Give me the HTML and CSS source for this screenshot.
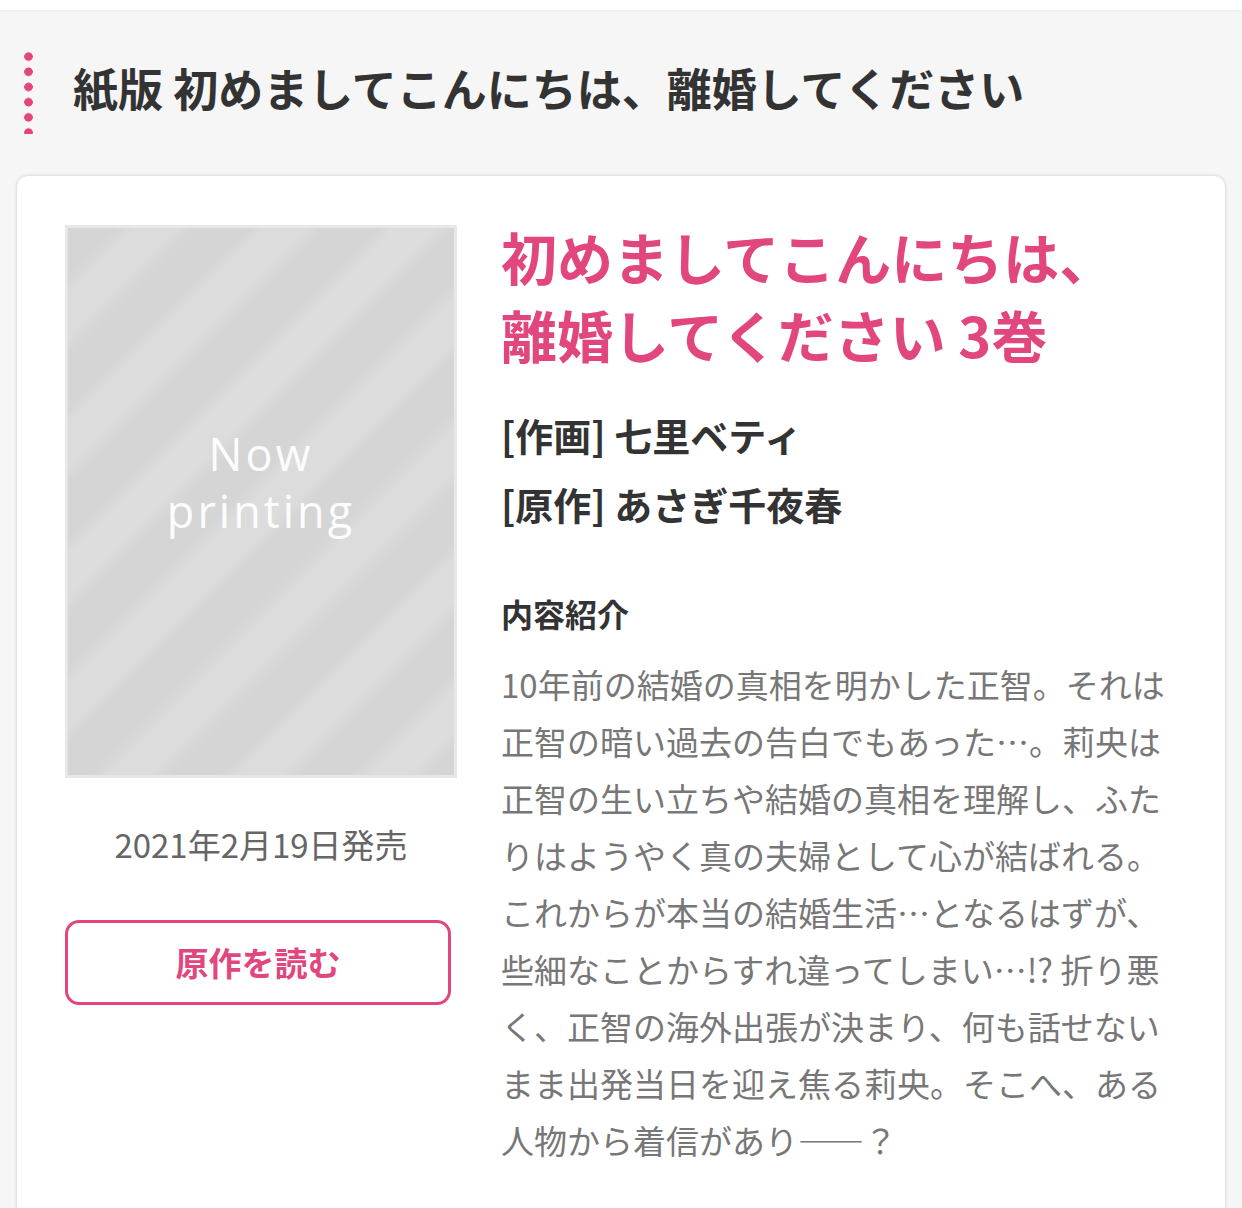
FILE: index.html
```html
<!DOCTYPE html>
<html lang="ja">
<head>
  <meta charset="UTF-8">
  <meta name="viewport" content="width=device-width, initial-scale=1.0">
  <title>紙版 初めましてこんにちは、離婚してください</title>
  <link rel="stylesheet" href="styles.css">
</head>
<body>
  <div class="topbar"></div>

  <header class="page-head">
    <span class="dots"></span>
    <h1 class="page-title">紙版 初めましてこんにちは、離婚してください</h1>
  </header>

  <section class="card">
    <div class="card-left">
      <div class="cover">
        <p class="cover-text">Now<br>printing</p>
      </div>
      <p class="release">2021年2月19日発売</p>
      <a class="btn-read" href="#">原作を読む</a>
    </div>

    <div class="card-right">
      <h2 class="book-title">初めましてこんにちは、<br>離婚してください 3巻</h2>
      <p class="credit">[作画] 七里ベティ</p>
      <p class="credit">[原作] あさぎ千夜春</p>

      <h3 class="intro-label">内容紹介</h3>
      <p class="intro">10年前の結婚の真相を明かした正智。それは正智の暗い過去の告白でもあった…。莉央は正智の生い立ちや結婚の真相を理解し、ふたりはようやく真の夫婦として心が結ばれる。これからが本当の結婚生活…となるはずが、些細なことからすれ違ってしまい…!? 折り悪く、正智の海外出張が決まり、何も話せないまま出発当日を迎え焦る莉央。そこへ、ある人物から着信があり——？</p>
    </div>
  </section>
</body>
</html>
```

FILE: styles.css
```css
:root {
  --color-fondo: #f6f6f6;
  --color-tarjeta: #ffffff;
  --color-rosa: #e2467f;
  --color-texto: #333333;
  --color-gris: #777777;
  --color-borde: #e4e4e4;
}

* {
  box-sizing: border-box;
}

body {
  margin: 0;
  background-color: var(--color-fondo);
  color: var(--color-texto);
  font-family: "Noto Sans CJK JP", "Noto Sans", sans-serif;
}

p, h1, h2, h3 {
  margin: 0;
}

.topbar {
  height: 10px;
  background-color: #ffffff;
  box-shadow: 0 1px 2px rgba(0,0,0,0.04);
}

.page-head {
  display: flex;
  align-items: center;
  padding: 39px 16px 41px 24px;
}

.dots {
  width: 9px;
  height: 85px;
  flex-shrink: 0;
  background-image: radial-gradient(circle, var(--color-rosa) 4px, transparent 4.6px);
  background-size: 9px 15.2px;
  background-repeat: repeat-y;
}

.page-title {
  margin: -8px 0 0 40px;
  font-size: 45px;
  line-height: 60px;
  font-weight: 700;
  color: var(--color-texto);
}

.card {
  display: flex;
  gap: 44px;
  margin: 0 16px;
  padding: 49px 48px 48px 48px;
  background-color: var(--color-tarjeta);
  border: 1px solid var(--color-borde);
  border-radius: 12px;
  box-shadow: 0 0 3px rgba(0,0,0,0.1);
}

.card-left {
  width: 392px;
  flex-shrink: 0;
}

.cover {
  height: 553px;
  border: 3px solid #e7e7e7;
  display: flex;
  align-items: center;
  justify-content: center;
  padding-bottom: 40px;
  background-image: repeating-linear-gradient(135deg, #d5d5d5 0 34px, #dcdcdc 48px 76px, #d5d5d5 90px 92px);
}

.cover-text {
  font-family: "Open Sans", "Noto Sans", sans-serif;
  font-size: 45px;
  line-height: 57px;
  letter-spacing: 3px;
  color: rgba(255,255,255,0.94);
  text-align: center;
}

.release {
  margin-top: 38px;
  font-size: 33px;
  line-height: 57px;
  color: #666666;
  text-align: center;
}

.btn-read {
  display: block;
  width: 386px;
  height: 85px;
  margin-top: 47px;
  border: 3px solid var(--color-rosa);
  border-radius: 14px;
  color: var(--color-rosa);
  font-size: 33px;
  font-weight: 700;
  line-height: 79px;
  text-align: center;
  text-decoration: none;
}

.card-right {
  flex: 1;
  min-width: 0;
}

.book-title {
  margin-top: -8px;
  font-size: 56px;
  line-height: 78px;
  font-weight: 700;
  color: var(--color-rosa);
}

.credit {
  font-size: 38px;
  line-height: 69px;
  font-weight: 700;
}

.book-title + .credit {
  margin-top: 27px;
}

.intro-label {
  margin-top: 47px;
  font-size: 32px;
  line-height: 57px;
  font-weight: 700;
}

.intro {
  margin-top: 14px;
  font-size: 33px;
  line-height: 57px;
  color: var(--color-gris);
}
```
